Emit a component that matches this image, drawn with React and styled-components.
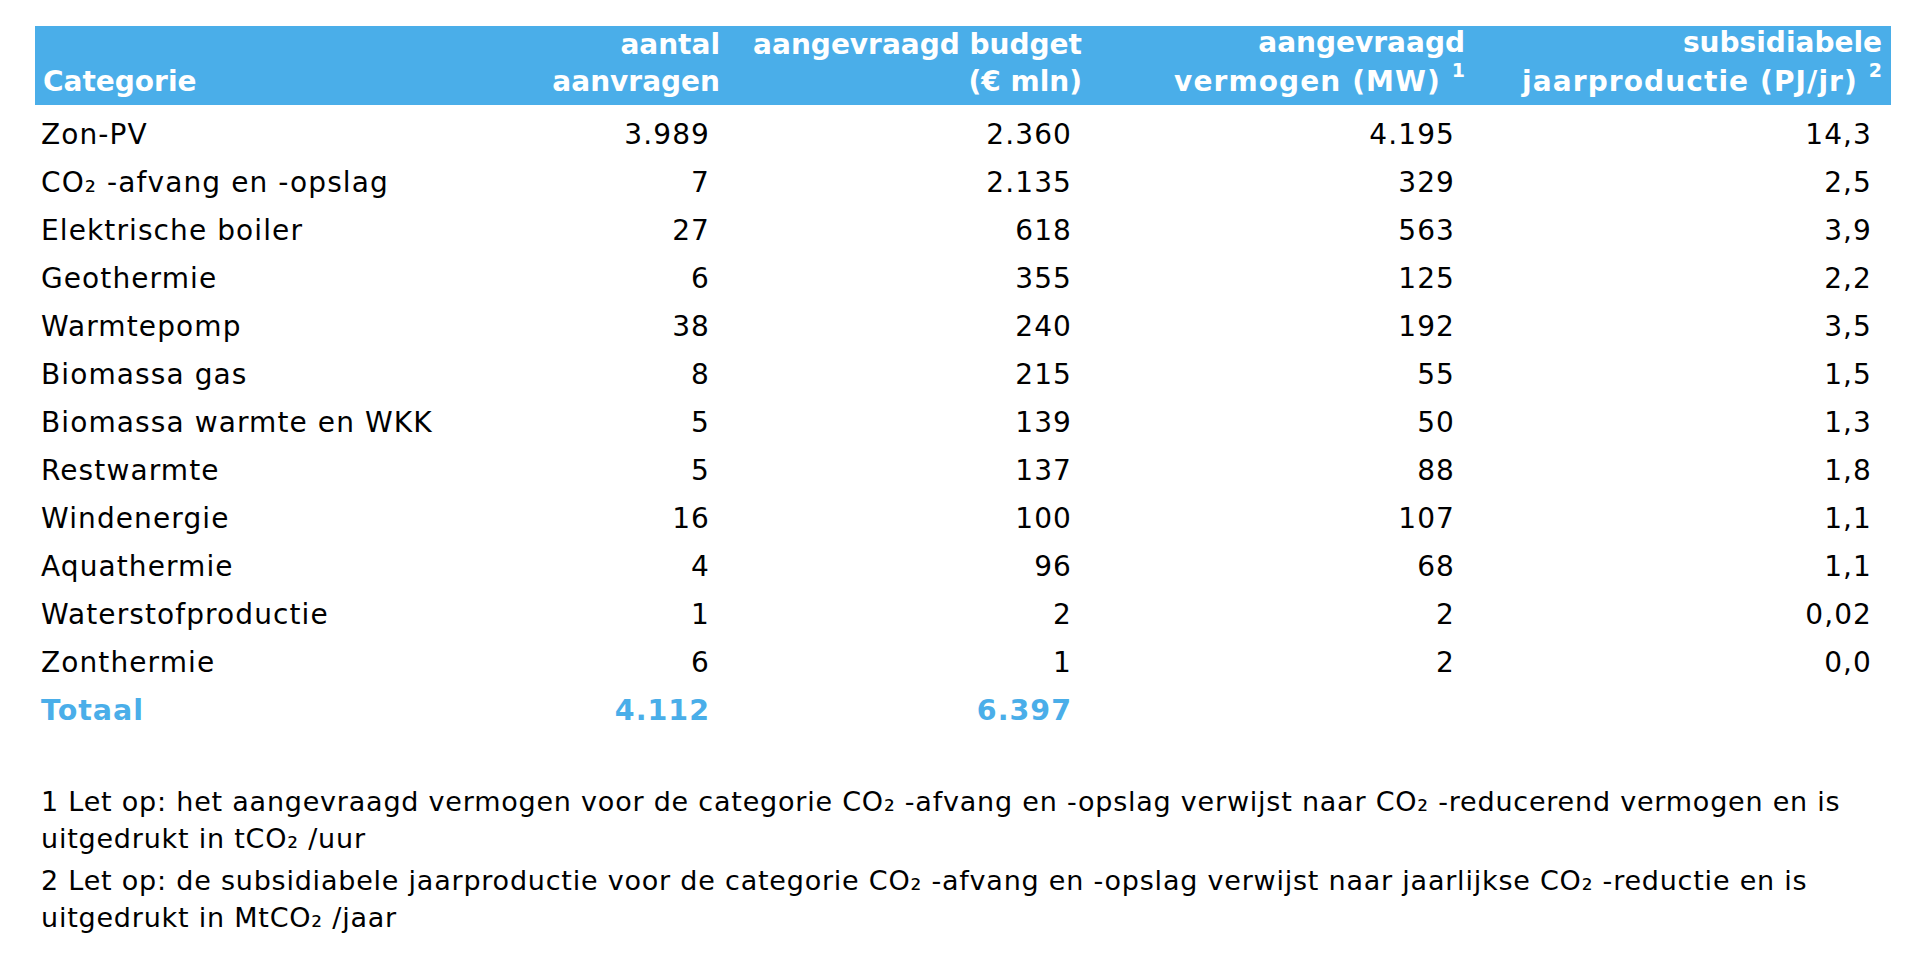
import React from 'react'
import styled, { createGlobalStyle } from 'styled-components'

const BLUE = '#4aaee9'
const COLUMNS = '425px 269px 362px 383px 417px'

const rows = [
  ['Zon-PV', '3.989', '2.360', '4.195', '14,3'],
  ['CO₂ -afvang en -opslag', '7', '2.135', '329', '2,5'],
  ['Elektrische boiler', '27', '618', '563', '3,9'],
  ['Geothermie', '6', '355', '125', '2,2'],
  ['Warmtepomp', '38', '240', '192', '3,5'],
  ['Biomassa gas', '8', '215', '55', '1,5'],
  ['Biomassa warmte en WKK', '5', '139', '50', '1,3'],
  ['Restwarmte', '5', '137', '88', '1,8'],
  ['Windenergie', '16', '100', '107', '1,1'],
  ['Aquathermie', '4', '96', '68', '1,1'],
  ['Waterstofproductie', '1', '2', '2', '0,02'],
  ['Zonthermie', '6', '1', '2', '0,0'],
]

const total = ['Totaal', '4.112', '6.397', '', '']

const App = () => (
  <Page>
    <GlobalStyle />
    <Table>
      <HeadRow>
        <HeadCell $first>
          <HeadLine>Categorie</HeadLine>
        </HeadCell>
        <HeadCell>
          <HeadLine>aantal</HeadLine>
          <HeadLine>aanvragen</HeadLine>
        </HeadCell>
        <HeadCell>
          <HeadLine>aangevraagd budget</HeadLine>
          <HeadLine>(€ mln)</HeadLine>
        </HeadCell>
        <HeadCell>
          <HeadLine>aangevraagd</HeadLine>
          <HeadLine $wide>vermogen (MW) <Note>1</Note></HeadLine>
        </HeadCell>
        <HeadCell>
          <HeadLine>subsidiabele</HeadLine>
          <HeadLine $wide>jaarproductie (PJ/jr) <Note>2</Note></HeadLine>
        </HeadCell>
      </HeadRow>
      <Body>
        {rows.map((row, key) => (
          <Row key={key}>
            {row.map((value, i) => (
              <Cell key={i} $first={i === 0}>{value}</Cell>
            ))}
          </Row>
        ))}
        <Row $total>
          {total.map((value, i) => (
            <Cell key={i} $first={i === 0}>{value}</Cell>
          ))}
        </Row>
      </Body>
    </Table>
    <Footnotes>
      <Footnote>
        <Line>1 Let op: het aangevraagd vermogen voor de categorie CO₂ -afvang en -opslag verwijst naar CO₂ -reducerend vermogen en is</Line>
        <Line>uitgedrukt in tCO₂ /uur</Line>
      </Footnote>
      <Footnote>
        <Line>2 Let op: de subsidiabele jaarproductie voor de categorie CO₂ -afvang en -opslag verwijst naar jaarlijkse CO₂ -reductie en is</Line>
        <Line>uitgedrukt in MtCO₂ /jaar</Line>
      </Footnote>
    </Footnotes>
  </Page>
)

const GlobalStyle = createGlobalStyle`
body {
  margin: 0;
  background: #fff;
  color: #000;
  font-family: "DejaVu Sans", Verdana, sans-serif;
}
`

const Page = styled.div`
padding: 26px 29px 0 35px;
`

const Table = styled.div`
width: 1856px;
`

const HeadRow = styled.div`
display: grid;
grid-template-columns: ${COLUMNS};
height: 79px;
box-sizing: border-box;
padding-bottom: 5px;
background-color: ${BLUE};
color: #fff;
font-size: 28px;
font-weight: bold;
line-height: 37px;
`

const HeadCell = styled.div`
display: flex;
flex-direction: column;
justify-content: flex-end;
height: 74px;
white-space: nowrap;
text-align: ${props => props.$first ? 'left' : 'right'};
padding: ${props => props.$first ? '0 0 0 8px' : '0 9px 0 0'};
`

const HeadLine = styled.span`
display: block;
letter-spacing: ${props => props.$wide ? '1.1px' : '0'};
`

const Note = styled.sup`
font-size: 19px;
line-height: 19px;
vertical-align: 14px;
letter-spacing: 0;
`

const Body = styled.div`
padding-top: 6px;
`

const Row = styled.div`
display: grid;
grid-template-columns: ${COLUMNS};
height: 48px;
font-size: ${props => props.$total ? '28.5px' : '28px'};
line-height: 48px;
white-space: nowrap;
color: ${props => props.$total ? BLUE : '#000'};
font-weight: ${props => props.$total ? 'bold' : 'normal'};
letter-spacing: ${props => props.$total ? '1px' : '1.1px'};
`

const Cell = styled.div`
text-align: ${props => props.$first ? 'left' : 'right'};
padding: ${props => props.$first ? '0 0 0 6px' : '0 19px 0 0'};
`

const Footnotes = styled.div`
margin-top: 49px;
padding-left: 6px;
font-size: 27px;
line-height: 36.6px;
letter-spacing: 0.78px;
`

const Footnote = styled.div`
margin-bottom: 6px;
`

const Line = styled.span`
display: block;
white-space: nowrap;
`

export default App
